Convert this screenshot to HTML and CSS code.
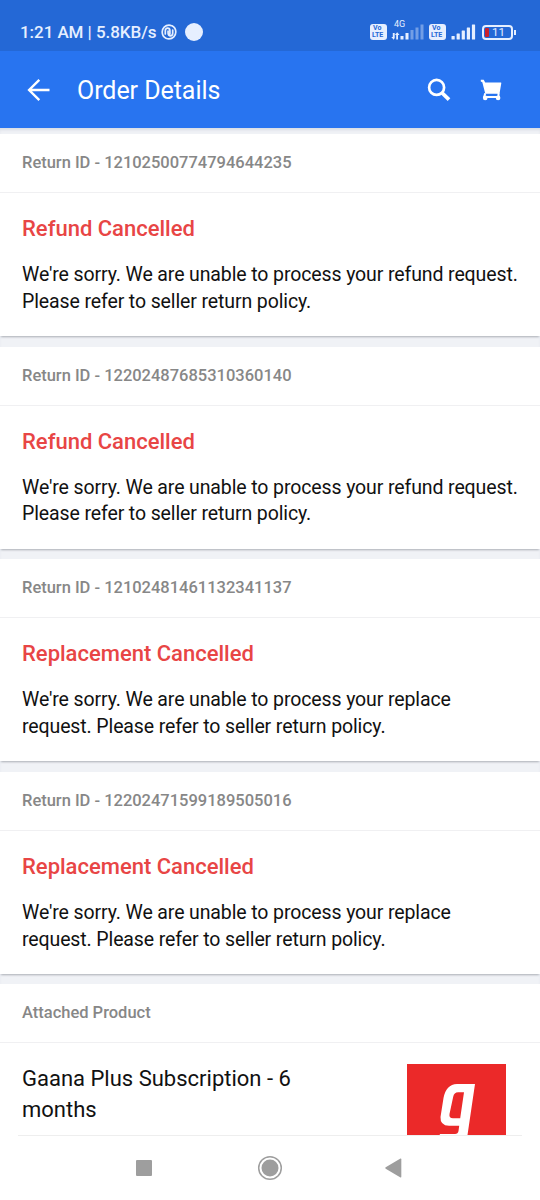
FILE: index.html
```html
<!DOCTYPE html>
<html lang="en">
<head>
<meta charset="utf-8">
<title>Order Details</title>
<link rel="stylesheet" href="styles.css">
</head>
<body>
<div class="screen">
  <div class="status">
    <span class="clock">1:21 AM | 5.8KB/s</span>
    <svg class="nfc" width="16" height="16" viewBox="0 0 16 16" fill="none" stroke="#e6efff" stroke-width="1.700" stroke-linecap="round"><path d="M5 14.200C2.500 13 1.200 10.700 1.200 8c0-3.700 3-6.800 6.800-6.800 1 0 1.800.2 2.600.5M11 1.800c2.500 1.200 3.800 3.500 3.800 6.200 0 3.700-3 6.800-6.800 6.800-1 0-2-.2-3-.6M4.300 10V6.700c0-1.500 1-2.500 2.300-2.500s2.300 1 2.300 2.500V10M11.700 6v3.300c0 1.500-1 2.500-2.300 2.500s-2.300-1-2.300-2.500V7"/></svg>
    <span class="dot"></span>
    <div class="signals">
      <span class="volte"><span>Vo</span><span>LTE</span></span>
      <span class="net"><span class="gen">4G</span>
        <svg width="34" height="16" viewBox="0 0 34 16" fill="#e6efff"><path d="M1.800 9v4H.3l2.400 2.800L3.700 14V9zM5.200 15.500V11H3.900l2.300-2.800L8.500 11H7v4.500z"/><rect x="9.500" y="12" width="3" height="3.500"/><rect x="14.500" y="9" width="3" height="6.500"/><g opacity=".4"><rect x="19.500" y="6" width="3" height="9.500"/><rect x="24.500" y="3.500" width="3" height="12"/><rect x="29.500" y="0.500" width="3" height="15"/></g></svg>
      </span>
      <span class="volte"><span>Vo</span><span>LTE</span></span>
      <svg class="bars" width="25" height="16" viewBox="0 0 25 16" fill="#e6efff"><rect x=".5" y="12" width="3.200" height="3.500" rx=".5"/><rect x="5.600" y="9.500" width="3.200" height="6" rx=".5"/><rect x="10.700" y="6.500" width="3.200" height="9" rx=".5"/><rect x="15.800" y="3.500" width="3.200" height="12" rx=".5"/><rect x="20.900" y=".5" width="3.200" height="15" rx=".5"/></svg>
      <span class="battery"><span class="charge"></span>11</span><span class="cap"></span>
    </div>
  </div>
  <header class="appbar">
    <svg class="back" width="24" height="24" viewBox="0 0 24 24" fill="none" stroke="#fff" stroke-width="2.400"><path d="M23.500 12H3.500M13.300 1.800 3.100 12l10.200 10.200"/></svg>
    <h1 class="title">Order Details</h1>
    <svg class="search" width="24" height="24" viewBox="0 0 24 24" fill="none" stroke="#fff"><circle cx="9.600" cy="9.400" r="7.500" stroke-width="2.700"/><path d="m15.200 15 6.800 6.600" stroke-width="3.800"/></svg>
    <svg class="cart" width="22" height="22" viewBox="0 0 22 22" fill="#fff"><path d="M.8.800h2.900l1.500 2.800h15.700c.4 0 .5.300.4.600L19.500 14.800H5.300L2.300 3.200.8 2.500z"/><path d="M5.200 14.300 4.200 18H18.500" fill="none" stroke="#fff" stroke-width="2"/><path d="M17.500 14h2v4h-2z"/><circle cx="5.200" cy="18.900" r="2.300"/><circle cx="18.100" cy="18.900" r="2.300"/></svg>
  </header>
  <main class="list">
    <section class="card">
      <div class="label">Return ID - 12102500774794644235</div>
      <div class="body"><h2 class="state">Refund Cancelled</h2><p class="message">We're sorry. We are unable to process your refund request.<br>Please refer to seller return policy.</p></div>
    </section>
    <section class="card">
      <div class="label">Return ID - 12202487685310360140</div>
      <div class="body"><h2 class="state">Refund Cancelled</h2><p class="message">We're sorry. We are unable to process your refund request.<br>Please refer to seller return policy.</p></div>
    </section>
    <section class="card">
      <div class="label">Return ID - 12102481461132341137</div>
      <div class="body"><h2 class="state">Replacement Cancelled</h2><p class="message">We're sorry. We are unable to process your replace<br>request. Please refer to seller return policy.</p></div>
    </section>
    <section class="card">
      <div class="label">Return ID - 12202471599189505016</div>
      <div class="body"><h2 class="state">Replacement Cancelled</h2><p class="message">We're sorry. We are unable to process your replace<br>request. Please refer to seller return policy.</p></div>
    </section>
    <section class="card attached">
      <div class="label">Attached Product</div>
      <div class="product">
        <p class="name">Gaana Plus Subscription - 6<br>months</p>
        <svg class="thumb" width="99" height="71" viewBox="0 0 99 71"><path fill="#eb2929" d="M0 0h99v71H0z"/><path fill="#fff" fill-rule="evenodd" d="M50 20H68L60.500 71H32.500l.6-1H48q3 0 3.500-3l.7-5.200H42Q33 61.500 33.500 53L36.500 34Q39 20.500 50 20zm1.200 8.300q-4.200 0-5 4.500L42.500 50q-.7 4.300 3.500 4.300h7.200L57 28.300z"/></svg>
      </div>
    </section>
  </main>
  <nav class="nav">
    <span class="recent"></span>
    <svg class="home" width="26" height="26" viewBox="0 0 26 26"><circle cx="13" cy="13" r="11.300" fill="none" stroke="#9e9e9e" stroke-width="1.500"/><circle cx="13" cy="13" r="8.500" fill="#9e9e9e"/></svg>
    <svg class="prev" width="17" height="20" viewBox="0 0 17 20"><path fill="#9e9e9e" d="M.7 9.300 15.500.6q.8-.3.800.7v17.400q0 1-.8.700L.7 10.700q-.8-.7 0-1.400z"/></svg>
  </nav>
</div>
</body>
</html>
```
FILE: styles.css
```css
* { box-sizing: border-box; }
body, h1, h2, p { margin: 0; }
body { font-family: Roboto, sans-serif; background: #fff; }
.screen { width: 540px; height: 1200px; display: flex; flex-direction: column; overflow: hidden; }

.status { height: 51px; flex: none; background: #2468d6; color: #e6efff; display: flex; align-items: center; padding: 14px 24px 0 20px; }
.clock { font-size: 17px; letter-spacing: -0.060px; font-weight: 500; line-height: 20px; width: 141px; white-space: nowrap; margin-top: -1px; }
.nfc { margin-top: -1px; }
.dot { width: 18px; height: 18px; border-radius: 50%; background: #e6efff; margin-left: 8px; margin-top: -1px; }
.signals { margin-left: auto; display: flex; align-items: center; height: 20px; margin-top: -1px; }
.volte { width: 17px; height: 16px; border-radius: 3px; background: #e6efff; color: #2468d6; font-size: 7px; font-weight: 700; line-height: 7px; display: flex; flex-direction: column; padding: 1px 0 0 2px; }
.volte span:first-child { padding-left: 1px; }
.net { width: 34px; height: 20px; margin: 0 4px 0 4px; display: flex; position: relative; align-items: center; }
.gen { position: absolute; left: 3px; top: -2px; font-size: 9px; line-height: 9px; }
.bars { margin-left: 5px; }
.battery { width: 31px; height: 15px; border: 2px solid #e6efff; border-radius: 4px; margin-left: 6px; font-size: 11.500px; line-height: 12px; padding-left: 1px; display: flex; align-items: center; gap: 3px; }
.charge { width: 4px; height: 9px; background: #c9202e; border-radius: 1px; }
.cap { width: 2px; height: 5px; background: #e6efff; margin-left: 1px; }

.appbar { height: 77px; flex: none; background: #2874f0; color: #fff; display: flex; align-items: center; padding: 0 38px 0 26px; }
.title { font-size: 25px; font-weight: 400; line-height: 30px; margin-left: 27px; flex: 1; padding-top: 2px; letter-spacing: -0.050px; }
.cart { margin-left: 29px; }

.list { height: 1007px; flex: none; overflow: hidden; background: #f0f2f6; display: flex; flex-direction: column; gap: 10.600px; padding-top: 6px; box-shadow: inset 0 3px 3px -1px #d9dde5; }
.card { height: 202px; flex: none; background: #fff; box-shadow: 0 2px 2px -1px #aaaeb5; }
.label { height: 59px; border-bottom: 1px solid #f0f0f2; padding-left: 22px; color: #878787; font-size: 16.500px; letter-spacing: -0.010px; font-weight: 500; line-height: 58px; }
.body { padding: 22px 0 0 22px; }
.state { color: #e84545; font-size: 22px; font-weight: 500; line-height: 28px; }
.message { color: #111; font-size: 19.500px; letter-spacing: -0.115px; line-height: 26.800px; margin-top: 19px; white-space: nowrap; }
.product { display: flex; justify-content: space-between; padding: 21px 34px 0 22px; }
.name { color: #111; font-size: 22px; line-height: 31px; margin-top: -1px; }
.thumb { flex: none; }

.nav { height: 65px; flex: none; background: #fff; display: flex; align-items: center; padding-left: 136px; position: relative; }
.nav::before { content: ""; position: absolute; top: 0; left: 18px; width: 504px; height: 1px; background: #eee; }
.recent { width: 16px; height: 16px; background: #9e9e9e; border-radius: 1px; }
.home { margin-left: 105px; }
.prev { margin-left: 102px; }
```
